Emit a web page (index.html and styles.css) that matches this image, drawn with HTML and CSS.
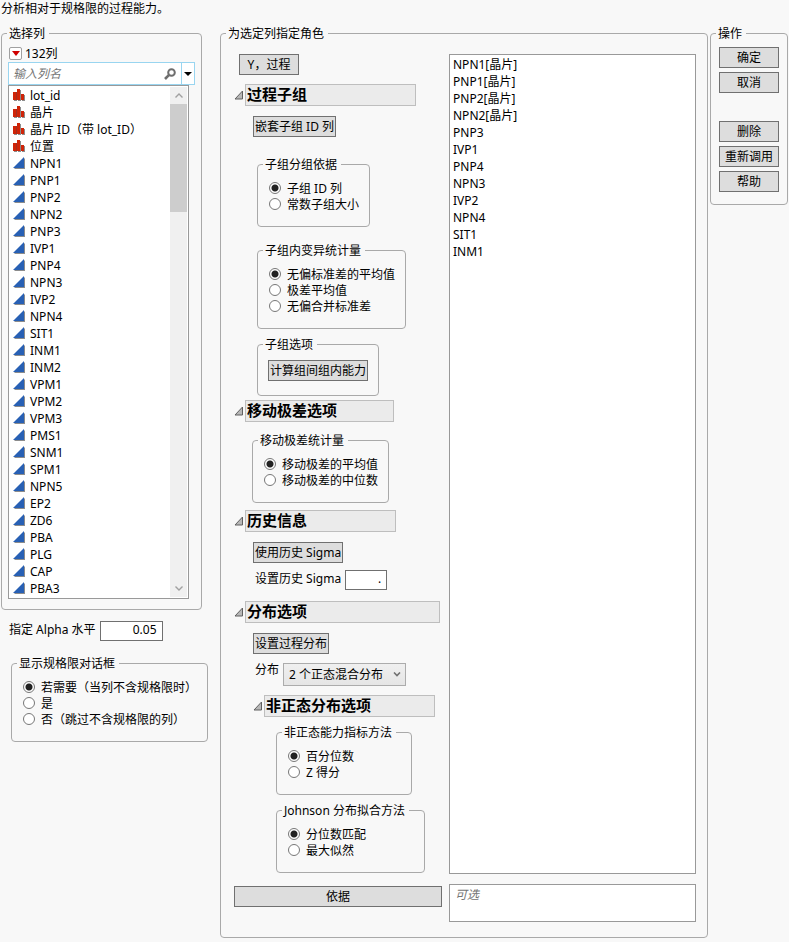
FILE: index.html
```
<!DOCTYPE html>
<html lang="zh-CN">
<head>
    <meta charset="UTF-8">
    <meta name="viewport" content="width=device-width, initial-scale=1.0">
    <title>过程能力</title>
    <link rel="stylesheet" href="styles.css">
</head>
<body>
    <svg class="sprite" aria-hidden="true">
        <symbol id="nominal" viewBox="0 0 12 12">
            <path fill="#8c8c8c" d="M1 4h3v8H1zM5 1h3v11H5zM9 6h3v6H9z"/>
            <path fill="#d02408" d="M0 3h3v8H0zM4 0h3v11H4zM8 5h3v6H8z"/>
            <path fill="#a03020" d="M3 3h1v8H3z"/>
        </symbol>
        <symbol id="continuous" viewBox="0 0 12 12">
            <path fill="#8c8c8c" d="M12 1v11H1z"/>
            <path fill="#2860b4" d="M11 0v11H0z"/>
        </symbol>
        <symbol id="disclosure" viewBox="0 0 10 10">
            <path fill="#b8b8b8" stroke="#606060" d="M8.5 1v8h-7.500z"/>
        </symbol>
        <symbol id="up" viewBox="0 0 8 5">
            <path fill="none" stroke="#a0a0a0" stroke-width="1.4" d="M.5 4.5 4 1l3.500 3.500"/>
        </symbol>
        <symbol id="down" viewBox="0 0 8 5">
            <path fill="none" stroke="#a0a0a0" stroke-width="1.4" d="M.5.5 4 4 7.500.5"/>
        </symbol>
    </svg>

    <p class="intro">分析相对于规格限的过程能力。</p>

    <main class="dialog">
        <div class="left">
            <fieldset class="group columns">
                <legend>选择列</legend>
                <div class="columns-body">
                    <div class="count">
                        <button class="red-menu" aria-label="列菜单"><svg viewBox="0 0 8 5"><path fill="#d00000" d="M0 0h8L4 5z"/></svg></button>
                        <span>132列</span>
                    </div>
                    <div class="search">
                        <input type="text" placeholder="输入列名" aria-label="输入列名">
                        <svg class="lens" viewBox="0 0 12 12"><circle cx="7.500" cy="4.500" r="3.300" fill="none" stroke="#6e6e6e" stroke-width="2"/><path stroke="#6e6e6e" stroke-width="2.600" d="M4.800 7.200 1 11"/></svg>
                        <button class="search-menu" aria-label="搜索选项"><svg viewBox="0 0 8 4"><path d="M0 0h8L4 4z"/></svg></button>
                    </div>
                    <div class="column-list">
                        <ul class="items">
                            <li><svg><use href="#nominal"/></svg>lot_id</li>
                            <li><svg><use href="#nominal"/></svg>晶片</li>
                            <li><svg><use href="#nominal"/></svg>晶片 ID（带 lot_ID）</li>
                            <li><svg><use href="#nominal"/></svg>位置</li>
                            <li><svg><use href="#continuous"/></svg>NPN1</li>
                            <li><svg><use href="#continuous"/></svg>PNP1</li>
                            <li><svg><use href="#continuous"/></svg>PNP2</li>
                            <li><svg><use href="#continuous"/></svg>NPN2</li>
                            <li><svg><use href="#continuous"/></svg>PNP3</li>
                            <li><svg><use href="#continuous"/></svg>IVP1</li>
                            <li><svg><use href="#continuous"/></svg>PNP4</li>
                            <li><svg><use href="#continuous"/></svg>NPN3</li>
                            <li><svg><use href="#continuous"/></svg>IVP2</li>
                            <li><svg><use href="#continuous"/></svg>NPN4</li>
                            <li><svg><use href="#continuous"/></svg>SIT1</li>
                            <li><svg><use href="#continuous"/></svg>INM1</li>
                            <li><svg><use href="#continuous"/></svg>INM2</li>
                            <li><svg><use href="#continuous"/></svg>VPM1</li>
                            <li><svg><use href="#continuous"/></svg>VPM2</li>
                            <li><svg><use href="#continuous"/></svg>VPM3</li>
                            <li><svg><use href="#continuous"/></svg>PMS1</li>
                            <li><svg><use href="#continuous"/></svg>SNM1</li>
                            <li><svg><use href="#continuous"/></svg>SPM1</li>
                            <li><svg><use href="#continuous"/></svg>NPN5</li>
                            <li><svg><use href="#continuous"/></svg>EP2</li>
                            <li><svg><use href="#continuous"/></svg>ZD6</li>
                            <li><svg><use href="#continuous"/></svg>PBA</li>
                            <li><svg><use href="#continuous"/></svg>PLG</li>
                            <li><svg><use href="#continuous"/></svg>CAP</li>
                            <li><svg><use href="#continuous"/></svg>PBA3</li>
                        </ul>
                        <div class="scrollbar">
                            <svg class="arrow"><use href="#up"/></svg>
                            <div class="thumb"></div>
                            <svg class="arrow"><use href="#down"/></svg>
                        </div>
                    </div>
                </div>
            </fieldset>

            <div class="field alpha">
                <label for="alpha">指定 Alpha 水平</label>
                <input type="text" id="alpha" value="0.05">
            </div>

            <fieldset class="group limits">
                <legend>显示规格限对话框</legend>
                <div class="group-body">
                    <label><input type="radio" name="limits" checked>若需要（当列不含规格限时）</label>
                    <label><input type="radio" name="limits">是</label>
                    <label><input type="radio" name="limits">否（跳过不含规格限的列）</label>
                </div>
            </fieldset>
        </div>

        <fieldset class="group roles">
            <legend>为选定列指定角色</legend>
            <div class="roles-body">
                <div class="options">
                    <button class="y-process">Y，过程</button>

                    <section class="outline subgroup">
                        <h2><svg><use href="#disclosure"/></svg><span>过程子组</span></h2>
                        <div class="outline-body">
                            <button>嵌套子组 ID 列</button>
                            <fieldset class="group inset by">
                                <legend>子组分组依据</legend>
                                <div class="group-body">
                                    <label><input type="radio" name="by" checked>子组 ID 列</label>
                                    <label><input type="radio" name="by">常数子组大小</label>
                                </div>
                            </fieldset>
                            <fieldset class="group inset within">
                                <legend>子组内变异统计量</legend>
                                <div class="group-body">
                                    <label><input type="radio" name="within" checked>无偏标准差的平均值</label>
                                    <label><input type="radio" name="within">极差平均值</label>
                                    <label><input type="radio" name="within">无偏合并标准差</label>
                                </div>
                            </fieldset>
                            <fieldset class="group inset">
                                <legend>子组选项</legend>
                                <div class="group-body">
                                    <button>计算组间组内能力</button>
                                </div>
                            </fieldset>
                        </div>
                    </section>

                    <section class="outline moving-range">
                        <h2><svg><use href="#disclosure"/></svg><span>移动极差选项</span></h2>
                        <div class="outline-body">
                            <fieldset class="group">
                                <legend>移动极差统计量</legend>
                                <div class="group-body">
                                    <label><input type="radio" name="range" checked>移动极差的平均值</label>
                                    <label><input type="radio" name="range">移动极差的中位数</label>
                                </div>
                            </fieldset>
                        </div>
                    </section>

                    <section class="outline history">
                        <h2><svg><use href="#disclosure"/></svg><span>历史信息</span></h2>
                        <div class="outline-body">
                            <button>使用历史 Sigma</button>
                            <div class="field sigma">
                                <label for="sigma">设置历史 Sigma</label>
                                <input type="text" id="sigma" value=".">
                            </div>
                        </div>
                    </section>

                    <section class="outline distribution">
                        <h2><svg><use href="#disclosure"/></svg><span>分布选项</span></h2>
                        <div class="outline-body">
                            <button>设置过程分布</button>
                            <div class="field dist">
                                <label for="dist">分布</label>
                                <div class="dropdown">
                                    <select id="dist"><option>2 个正态混合分布</option></select>
                                    <svg viewBox="0 0 8 5"><path fill="none" stroke="#707070" stroke-width="1.600" d="M1 .5 4 3.500 7 .5"/></svg>
                                </div>
                            </div>
                            <section class="outline nonnormal">
                                <h2><svg><use href="#disclosure"/></svg><span>非正态分布选项</span></h2>
                                <div class="outline-body">
                                    <fieldset class="group inset">
                                        <legend>非正态能力指标方法</legend>
                                        <div class="group-body">
                                            <label><input type="radio" name="method" checked>百分位数</label>
                                            <label><input type="radio" name="method">Z 得分</label>
                                        </div>
                                    </fieldset>
                                    <fieldset class="group inset">
                                        <legend>Johnson 分布拟合方法</legend>
                                        <div class="group-body">
                                            <label><input type="radio" name="johnson" checked>分位数匹配</label>
                                            <label><input type="radio" name="johnson">最大似然</label>
                                        </div>
                                    </fieldset>
                                </div>
                            </section>
                        </div>
                    </section>
                </div>

                <ul class="items chosen">
                    <li>NPN1[晶片]</li>
                    <li>PNP1[晶片]</li>
                    <li>PNP2[晶片]</li>
                    <li>NPN2[晶片]</li>
                    <li>PNP3</li>
                    <li>IVP1</li>
                    <li>PNP4</li>
                    <li>NPN3</li>
                    <li>IVP2</li>
                    <li>NPN4</li>
                    <li>SIT1</li>
                    <li>INM1</li>
                </ul>

                <button class="by-button">依据</button>
                <textarea class="by-list" placeholder="可选" aria-label="依据"></textarea>
            </div>
        </fieldset>

        <fieldset class="group actions">
            <legend>操作</legend>
            <div class="actions-body">
                <button>确定</button>
                <button>取消</button>
                <button class="remove">删除</button>
                <button>重新调用</button>
                <button>帮助</button>
            </div>
        </fieldset>
    </main>
</body>
</html>
```
FILE: styles.css
```
:root {
    --bg-color: #f8f8f8;
    --line-color: #a9a9a9;
    --button-color: #dddddd;
    --button-border: #707070;
    --search-border: #99d5f0;
    --header-color: #ebebeb;
}

* {
    box-sizing: border-box;
}

body {
    margin: 0;
    padding: 0 1px;
    background: var(--bg-color);
    color: #000;
    font: 12px/17px "Noto Sans", "Noto Sans CJK SC", sans-serif;
}

button,
input,
select,
textarea {
    margin: 0;
    font: inherit;
    color: inherit;
    border-radius: 0;
}

button {
    height: 21px;
    padding: 0 1px;
    border: 1px solid var(--button-border);
    background: var(--button-color);
    line-height: 17px;
    white-space: nowrap;
}

svg {
    display: block;
    flex: none;
}

.sprite {
    position: absolute;
    width: 0;
    height: 0;
}

.intro {
    margin: 0 0 8px;
}

.dialog {
    display: grid;
    grid-template-columns: 207px 1fr 78px;
    column-gap: 2px;
    align-items: start;
}

/* titled boxes */
.group {
    width: fit-content;
    min-width: 0;
    margin: 0;
    padding: 0;
    border: 1px solid var(--line-color);
    border-radius: 4px;
}

.group > legend {
    margin: 0 15px 0 5px;
    padding: 0 4px 0 2px;
    white-space: nowrap;
}

.group-body {
    padding: 7px 10px 14px;
}

.group-body > button {
    display: block;
}

.group-body label {
    display: flex;
    align-items: center;
    gap: 6px;
    height: 16px;
    padding-left: 1px;
    white-space: nowrap;
}

.inset {
    margin-left: 4px;
}

input[type="radio"] {
    appearance: none;
    flex: none;
    width: 12px;
    height: 12px;
    border: 1px solid #777;
    border-radius: 50%;
    background: #fff;
}

input[type="radio"]:checked {
    background: radial-gradient(circle, #222 0 3px, #fff 4px);
}

/* label with a box beside it */
.field {
    display: flex;
    align-items: flex-start;
    gap: 4px;
    white-space: nowrap;
}

.field input {
    height: 20px;
    padding: 0 5px 3px;
    border: 1px solid var(--button-border);
    background: #fff;
    line-height: 15px;
    text-align: right;
}

/* lists */
.items {
    flex: 1;
    margin: 0;
    padding: 0;
    list-style: none;
}

.items li {
    display: flex;
    align-items: center;
    gap: 5px;
    height: 17px;
    white-space: nowrap;
}

.items svg {
    width: 12px;
    height: 12px;
    margin-bottom: 1px;
}

/* left side */
.columns {
    width: auto;
    margin-right: 6px;
}

.columns-body {
    padding: 2px 6px 10px;
}

.count {
    display: flex;
    align-items: center;
    gap: 3px;
    height: 18px;
    padding-left: 1px;
}

.red-menu {
    display: grid;
    place-items: center;
    width: 13px;
    height: 13px;
    padding: 0;
    border-color: #a0a0a0;
    border-radius: 2px;
    background: #fff;
}

.red-menu svg {
    width: 8px;
    height: 5px;
}

.search {
    display: flex;
    align-items: center;
    height: 23px;
    border: 1px solid var(--search-border);
    background: #fff;
}

.search input {
    flex: 1;
    min-width: 0;
    padding: 0 4px;
    border: 0;
    background: none;
}

::placeholder {
    color: #757575;
    font-style: italic;
    opacity: 1;
}

.lens {
    width: 12px;
    height: 12px;
    margin-right: 5px;
}

.search-menu {
    display: grid;
    place-items: center;
    width: 13px;
    padding: 0;
    border: 0;
    border-left: 1px solid var(--search-border);
    background: #fff;
}

.search-menu svg {
    width: 8px;
    height: 4px;
}

.column-list {
    display: flex;
    margin-right: 6px;
    padding: 1px 1px 1px 4px;
    border: 1px solid #999;
    background: #fff;
}

.scrollbar {
    display: flex;
    flex-direction: column;
    width: 17px;
    background: #f0f0f0;
}

.arrow {
    width: 8px;
    height: 5px;
    margin: 6px auto;
}

.thumb {
    height: 108px;
    margin-bottom: auto;
    background: #cdcdcd;
}

.alpha {
    margin: 11px 0 14px 8px;
}

.alpha input {
    width: 63px;
}

.limits {
    margin-left: 10px;
}

/* roles */
.roles {
    width: auto;
    margin-left: 10px;
}

.roles-body {
    display: grid;
    grid-template-columns: 209px 1fr;
    gap: 10px 6px;
    padding: 12px 11px 15px 13px;
}

.options {
    padding-bottom: 1px;
}

.y-process {
    display: block;
    width: 60px;
    margin: 0 0 9px 5px;
}

.outline {
    width: fit-content;
}

.outline h2 {
    display: flex;
    align-items: center;
    gap: 1px;
    margin: 0;
    font-size: 15px;
    line-height: 18px;
}

.outline h2 svg {
    width: 10px;
    height: 10px;
}

.outline h2 span {
    flex: 1;
    padding: 0 2px 2px 1px;
    border: 1px solid #bebebe;
    background: var(--header-color);
}

.outline-body {
    padding: 10px 10px 0 19px;
}

.outline-body > button {
    display: block;
}

.subgroup {
    margin-bottom: 4px;
}

.by {
    margin-top: 19px;
    margin-bottom: 15px;
}

.within {
    margin-bottom: 7px;
}

.moving-range {
    margin-bottom: 7px;
}

.moving-range > .outline-body {
    padding-right: 5px;
    padding-left: 18px;
}

.history {
    margin-bottom: 11px;
}

.sigma {
    margin-top: 7px;
    padding-left: 2px;
}

.sigma input {
    width: 42px;
}

.history > .outline-body {
    padding-right: 9px;
}

.distribution > .outline-body {
    padding-right: 5px;
}

.dist {
    margin: 9px 0;
    padding-left: 2px;
}

.dist label {
    line-height: 14px;
}

.dropdown {
    display: grid;
    align-items: center;
}

.dropdown select {
    grid-area: 1 / 1;
    appearance: none;
    height: 23px;
    padding: 0 22px 0 5px;
    border: 1px solid #acacac;
    background: linear-gradient(#f0f0f0, #e5e5e5);
}

.dropdown svg {
    grid-area: 1 / 1;
    justify-self: end;
    width: 8px;
    height: 5px;
    margin-right: 5px;
    pointer-events: none;
}

.nonnormal > .outline-body {
    display: grid;
    gap: 7px;
    padding-top: 7px;
}

.chosen {
    padding: 1px 3px;
    border: 1px solid #999;
    background: #fff;
}

.by-button {
    width: 208px;
    margin-top: 2px;
}

.by-list {
    width: 100%;
    height: 38px;
    padding: 1px 5px;
    border: 1px solid #999;
    background: #fff;
    resize: none;
}

/* actions */
.actions {
    width: auto;
}

.actions-body {
    display: grid;
    gap: 4px;
    padding: 5px 8px 12px;
}

.actions .remove {
    margin-top: 24px;
}
```
